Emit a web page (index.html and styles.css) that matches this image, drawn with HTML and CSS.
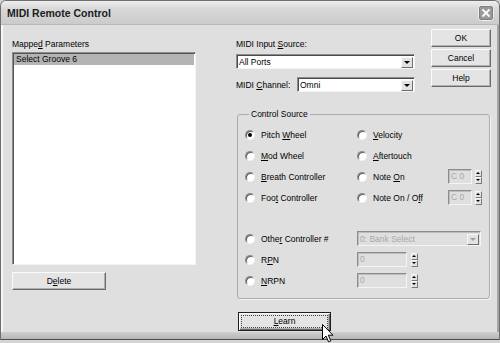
FILE: index.html
```html
<!DOCTYPE html>
<html lang="en">
<head>
    <meta charset="UTF-8">
    <title>MIDI Remote Control</title>
    <link rel="stylesheet" href="styles.css">
</head>
<body>
    <div class="window">
        <div class="titlebar">
            <span class="title">MIDI Remote Control</span>
            <span class="close-btn">
                <svg width="16" height="16" viewBox="0 0 16 16">
                    <rect x="0.5" y="0.5" width="15" height="15" rx="3" fill="#9a9a9a" stroke="#f2f2f2"/>
                    <rect x="1.5" y="1.5" width="13" height="13" rx="2" fill="none" stroke="#7c7c7c"/>
                    <path d="M4.5 4.5 L11.5 11.5 M11.5 4.5 L4.5 11.5" stroke="#fff" stroke-width="1.8"/>
                </svg>
            </span>
        </div>

        <div class="client">
            <!-- Mapped parameters list -->
            <div class="left-col">
                <div class="label">Mappe<u>d</u> Parameters</div>
                <div class="listbox">
                    <div class="list-item selected">Select Groove 6</div>
                </div>
                <button class="btn delete-btn">D<u>e</u>lete</button>
            </div>

            <div class="right-col">
                <div class="top-row">
                    <div class="fields">
                        <div class="label">MIDI Input <u>S</u>ource:</div>
                        <div class="select source-select">
                            <span class="select-text">All Ports</span>
                            <span class="drop-btn"><span class="tri"></span></span>
                        </div>
                        <div class="channel-row">
                            <span class="channel-label">MIDI <u>C</u>hannel:</span>
                            <div class="select channel-select">
                                <span class="select-text">Omni</span>
                                <span class="drop-btn"><span class="tri"></span></span>
                            </div>
                        </div>
                    </div>
                    <div class="buttons">
                        <button class="btn side-btn">OK</button>
                        <button class="btn side-btn">Cancel</button>
                        <button class="btn side-btn">Help</button>
                    </div>
                </div>

                <!-- Control Source group -->
                <fieldset class="group">
                    <legend>Control Source</legend>
                    <div class="radio-row">
                        <div class="col1"><span class="radio checked"></span><span>Pitch <u>W</u>heel</span></div>
                        <div class="col2"><span class="radio"></span><span><u>V</u>elocity</span></div>
                    </div>
                    <div class="radio-row">
                        <div class="col1"><span class="radio"></span><span><u>M</u>od Wheel</span></div>
                        <div class="col2"><span class="radio"></span><span><u>A</u>ftertouch</span></div>
                    </div>
                    <div class="radio-row">
                        <div class="col1"><span class="radio"></span><span><u>B</u>reath Controller</span></div>
                        <div class="col2"><span class="radio"></span><span>Note <u>O</u>n</span></div>
                        <div class="spinner">
                            <span class="field note-field">C 0</span>
                            <span class="spin"><span class="spin-up"></span><span class="spin-down"></span></span>
                        </div>
                    </div>
                    <div class="radio-row">
                        <div class="col1"><span class="radio"></span><span>Foo<u>t</u> Controller</span></div>
                        <div class="col2"><span class="radio"></span><span>Note On / O<u>f</u>f</span></div>
                        <div class="spinner">
                            <span class="field note-field">C 0</span>
                            <span class="spin"><span class="spin-up"></span><span class="spin-down"></span></span>
                        </div>
                    </div>
                    <div class="radio-row other-row">
                        <div class="col1"><span class="radio"></span><span>Othe<u>r</u> Controller #</span></div>
                        <div class="select disabled controller-select">
                            <span class="select-text">0: Bank Select</span>
                            <span class="drop-btn"><span class="tri"></span></span>
                        </div>
                    </div>
                    <div class="radio-row">
                        <div class="col1"><span class="radio"></span><span>R<u>P</u>N</span></div>
                        <div class="spinner">
                            <span class="field num-field">0</span>
                            <span class="spin"><span class="spin-up"></span><span class="spin-down"></span></span>
                        </div>
                    </div>
                    <div class="radio-row">
                        <div class="col1"><span class="radio"></span><span><u>N</u>RPN</span></div>
                        <div class="spinner">
                            <span class="field num-field">0</span>
                            <span class="spin"><span class="spin-up"></span><span class="spin-down"></span></span>
                        </div>
                    </div>
                </fieldset>

                <button class="btn learn-btn"><span class="focus-rect"><u>L</u>earn</span></button>
            </div>
        </div>
        <div class="frame-bottom"></div>

        <!-- mouse pointer over the Learn button -->
        <svg class="cursor" width="12" height="19" viewBox="0 0 12 19">
            <path d="M0.5 0.5 L0.5 15.5 L4 12 L6.5 17.8 L8.8 16.8 L6.3 11.2 L11 11.2 Z" fill="#fff" stroke="#000" stroke-width="1"/>
        </svg>
    </div>
</body>
</html>
```

FILE: styles.css
```css
html, body {
    margin: 0;
    padding: 0;
}
body {
    width: 500px;
    height: 343px;
    overflow: hidden;
    background: #d4d4d4;
    font-family: "Liberation Sans", Arial, sans-serif;
    font-size: 8.5px;
    color: #000;
}
u {
    text-decoration-thickness: 1px;
    text-underline-offset: 1px;
}
.window {
    position: relative;
    height: 340px;
    box-sizing: border-box;
    display: flex;
    flex-direction: column;
    background: #dfdfdf;
    border: 1px solid #6e6e6e;
    border-bottom: none;
    border-radius: 6px 6px 0 0;
    box-shadow: inset 2px 0 0 #f6f6f6, inset -2px 0 0 #a4a4a4;
}
/* Title bar */
.titlebar {
    height: 24px;
    box-sizing: border-box;
    display: flex;
    align-items: center;
    justify-content: space-between;
    padding: 0 5px 0 6px;
    background: linear-gradient(#eeeeee, #d8d8d8 35%, #cbcbcb);
    border-radius: 5px 5px 0 0;
    border-bottom: 1px solid #b8b8b8;
}
.title {
    font-size: 10.5px;
    font-weight: bold;
    color: #1c1c1c;
}
.close-btn {
    display: flex;
    width: 16px;
    height: 16px;
}
/* Client area */
.client {
    flex: 1;
    display: flex;
    padding-left: 11px;
}
.left-col {
    width: 184px;
    padding-top: 14px;
}
.label {
    line-height: 11px;
    height: 11px;
    white-space: nowrap;
}
.listbox {
    margin-top: 2px;
    height: 213px;
    box-sizing: border-box;
    background: #fff;
    border: 1px solid;
    border-color: #8c8c8c #f4f4f4 #f4f4f4 #8c8c8c;
    box-shadow: inset 1px 1px 0 #555;
    padding: 1px 1px 0 1px;
}
.list-item {
    height: 11px;
    line-height: 11px;
    padding-left: 2px;
}
.list-item.selected {
    background: #b4b4b4;
}
.btn {
    display: block;
    margin: 0;
    padding: 0;
    box-sizing: border-box;
    font-family: "Liberation Sans", Arial, sans-serif;
    font-size: 8.5px;
    color: #000;
    background: #e4e4e4;
    border: 1px solid;
    border-color: #fbfbfb #6a6a6a #6a6a6a #fbfbfb;
    box-shadow: inset -1px -1px 0 #b0b0b0;
}
.delete-btn {
    margin-top: 7px;
    width: 94px;
    height: 18px;
}
.right-col {
    margin-left: 40px;
    width: 255px;
    padding-top: 4px;
}
.top-row {
    display: flex;
}
.fields {
    width: 179px;
    padding-top: 10px;
}
.select {
    display: flex;
    align-items: center;
    height: 15px;
    box-sizing: border-box;
    background: #fff;
    border: 1px solid;
    border-color: #8c8c8c #f4f4f4 #f4f4f4 #8c8c8c;
    box-shadow: inset 1px 1px 0 #4a4a4a;
    padding: 1px 1px 0 2px;
}
.select-text {
    flex: 1;
    white-space: nowrap;
}
.drop-btn {
    width: 12px;
    height: 11px;
    box-sizing: border-box;
    display: flex;
    align-items: center;
    justify-content: center;
    background: #e2e2e2;
    border: 1px solid;
    border-color: #f8f8f8 #6e6e6e #6e6e6e #f8f8f8;
}
.tri {
    width: 0;
    height: 0;
    border-left: 3px solid transparent;
    border-right: 3px solid transparent;
    border-top: 3px solid #000;
}
.source-select {
    margin-top: 4px;
}
.channel-row {
    display: flex;
    align-items: center;
    margin-top: 8px;
}
.channel-label {
    width: 61px;
    white-space: nowrap;
}
.channel-select {
    flex: 1;
}
.buttons {
    margin-left: 16px;
    width: 60px;
    display: flex;
    flex-direction: column;
    gap: 2px;
}
.side-btn {
    width: 60px;
    height: 18px;
}
/* Control Source group */
.group {
    margin: 17px 0 0 1px;
    width: 253px;
    box-sizing: border-box;
    padding: 4px 0 7px 7px;
    border: 1px solid #ababab;
    border-radius: 3px;
    box-shadow: 1px 1px 0 #f4f4f4;
}
.group legend {
    padding: 0 2px;
    margin-left: 4px;
    line-height: 11px;
}
.radio-row {
    display: flex;
    align-items: center;
    height: 21px;
}
.other-row {
    margin-top: 20px;
}
.col1, .col2 {
    display: flex;
    align-items: center;
    white-space: nowrap;
}
.col1 {
    width: 112px;
}
.col2 {
    width: 91px;
}
.radio {
    position: relative;
    flex: none;
    width: 10px;
    height: 10px;
    margin-right: 6px;
    box-sizing: border-box;
    border-radius: 50%;
    background: #fff;
    border: 1px solid;
    border-color: #8a8a8a #f4f4f4 #f4f4f4 #8a8a8a;
    box-shadow: inset 1px 1px 0 #5a5a5a;
}
.radio.checked::after {
    content: "";
    position: absolute;
    left: 2px;
    top: 2px;
    width: 4px;
    height: 4px;
    border-radius: 50%;
    background: #000;
}
.spinner {
    display: flex;
    align-items: center;
}
.field {
    height: 15px;
    box-sizing: border-box;
    line-height: 12px;
    padding-left: 2px;
    color: #a8a8a8;
    background: #dfdfdf;
    border: 1px solid;
    border-color: #8c8c8c #f4f4f4 #f4f4f4 #8c8c8c;
    box-shadow: inset 1px 1px 0 #bdbdbd;
}
.note-field {
    width: 24px;
}
.num-field {
    width: 50px;
}
.spin {
    display: flex;
    flex-direction: column;
    margin-left: 3px;
}
.num-field + .spin {
    margin-left: 4px;
}
.spin-up, .spin-down {
    position: relative;
    width: 7px;
    height: 7px;
    box-sizing: border-box;
    background: #e2e2e2;
    border: 1px solid;
    border-color: #f8f8f8 #7a7a7a #7a7a7a #f8f8f8;
}
.spin-up::after, .spin-down::after {
    content: "";
    position: absolute;
    left: 0;
    width: 0;
    height: 0;
    border-left: 2.5px solid transparent;
    border-right: 2.5px solid transparent;
}
.spin-up::after {
    top: 1px;
    border-bottom: 2px solid #000;
}
.spin-down::after {
    top: 1px;
    border-top: 2px solid #000;
}
.select.disabled {
    background: #dfdfdf;
    color: #a8a8a8;
    box-shadow: inset 1px 1px 0 #bdbdbd;
}
.select.disabled .tri {
    border-top-color: #a0a0a0;
}
.controller-select {
    width: 124px;
}
.learn-btn {
    margin: 13px 0 0 2px;
    width: 93px;
    height: 19px;
    padding: 2px;
    border: 1px solid #1e1e1e;
    box-shadow: inset 1px 1px 0 #fbfbfb, inset -1px -1px 0 #6a6a6a, inset -2px -2px 0 #b0b0b0;
}
.focus-rect {
    display: block;
    height: 100%;
    box-sizing: border-box;
    border: 1px dotted #444;
    line-height: 11px;
}
.frame-bottom {
    height: 7px;
    background: linear-gradient(#cfcfcf, #b6b6b6);
    border-bottom: 1px solid #4e4e4e;
}
.cursor {
    position: absolute;
    left: 321px;
    top: 323px;
}
```
